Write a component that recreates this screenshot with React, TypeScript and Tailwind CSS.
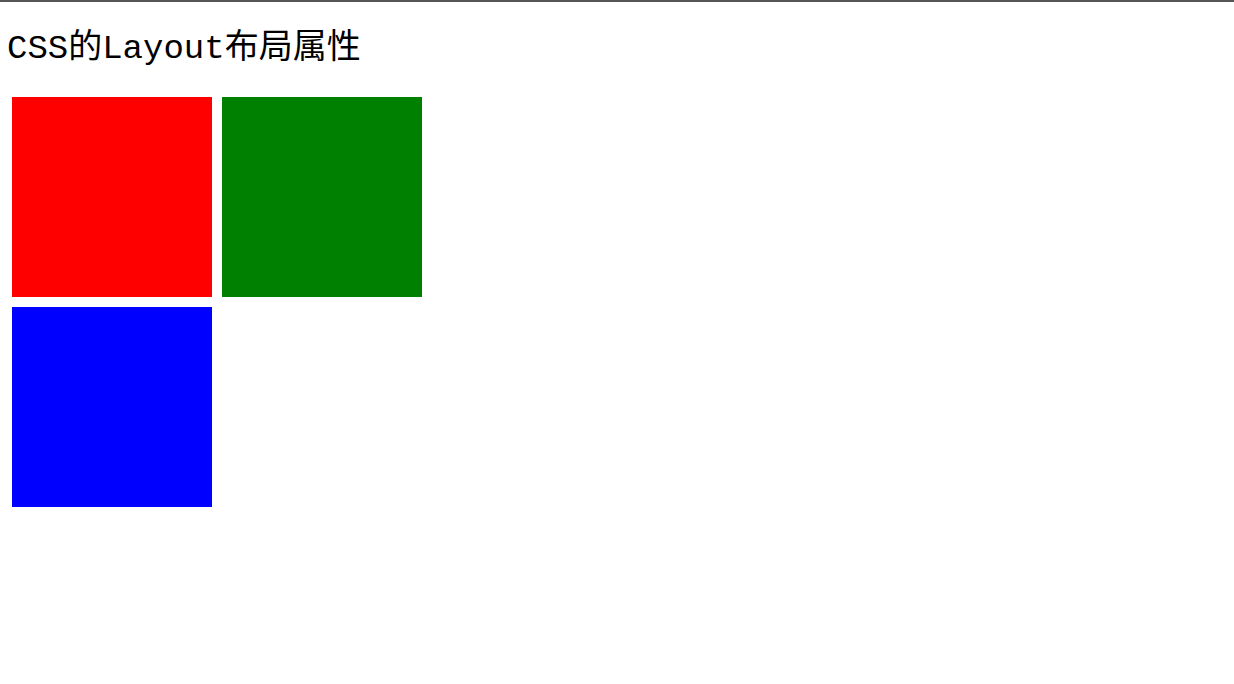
const boxes = ["bg-[#ff0000]", "bg-[#008000]", "bg-[#0000ff]"];

export default function App() {
  return (
    <div className="min-h-[684px] w-full bg-white border-t-2 border-[#555555] text-black">
      <h1
        className="pl-[7px] pt-[23px] text-[34px] leading-[48px] font-normal"
        style={{ fontFamily: '"Liberation Mono", "Noto Sans CJK SC", monospace' }}
      >
        CSS的Layout布局属性
      </h1>
      <div className="flex flex-wrap w-[430px] pl-[7px] pt-[19px]">
        {boxes.map((c) => (
          <div key={c} className={`w-[200px] h-[200px] m-[5px] ${c}`} />
        ))}
      </div>
    </div>
  );
}
